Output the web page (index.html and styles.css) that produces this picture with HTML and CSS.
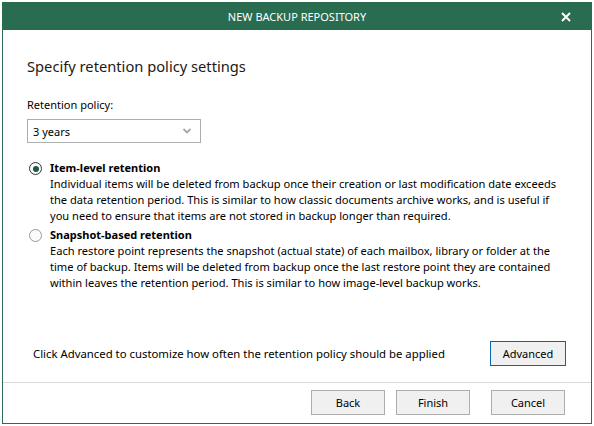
FILE: index.html
```html
<!DOCTYPE html>
<html>
<head>
<meta charset="utf-8">
<link rel="stylesheet" href="styles.css">
</head>
<body>
<div class="window">
  <div class="titlebar">
    <span class="title">NEW BACKUP REPOSITORY</span>
    <svg class="close" width="10" height="10" viewBox="0 0 10 10"><path d="M1 1L9 9M9 1L1 9" stroke="#fff" stroke-width="2" fill="none"/></svg>
  </div>
  <div class="main">
    <div class="heading">Specify retention policy settings</div>
    <div class="label">Retention policy:</div>
    <div class="select">
      <span>3 years</span>
      <svg class="chev" width="10" height="6" viewBox="0 0 10 6"><path d="M1.5 1L5 4.5L8.5 1" stroke="#a8a8a8" stroke-width="1.8" fill="none"/></svg>
    </div>
    <div class="option first">
      <span class="radio checked"></span>
      <div class="otext">
        <div class="oname">Item-level retention</div>
        <div class="odesc">Individual items will be deleted from backup once their creation or last modification date exceeds<br>the data retention period. This is similar to how classic documents archive works, and is useful if<br>you need to ensure that items are not stored in backup longer than required.</div>
      </div>
    </div>
    <div class="option second">
      <span class="radio"></span>
      <div class="otext">
        <div class="oname">Snapshot-based retention</div>
        <div class="odesc">Each restore point represents the snapshot (actual state) of each mailbox, library or folder at the<br>time of backup. Items will be deleted from backup once the last restore point they are contained<br>within leaves the retention period. This is similar to how image-level backup works.</div>
      </div>
    </div>
    <div class="advrow">
      <span class="advtext">Click Advanced to customize how often the retention policy should be applied</span>
      <button class="btn focused">Advanced</button>
    </div>
  </div>
  <div class="footer">
    <button class="btn">Back</button>
    <button class="btn finish">Finish</button>
    <button class="btn cancel">Cancel</button>
  </div>
</div>
</body>
</html>
```
FILE: styles.css
```css
html, body {
  margin: 0;
  padding: 0;
  background: #ffffff;
}
body {
  font-family: "Noto Sans", "Open Sans", sans-serif;
  font-size: 11px;
  color: #000;
}
.window {
  margin: 2px 0 0 2px;
  width: 588px;
  height: 420px;
  border: 1px solid #296c4f;
  display: flex;
  flex-direction: column;
  background: #fff;
}
.titlebar {
  height: 28px;
  margin: -1px -1px 0 -1px;
  background: #296c4f;
  color: #fff;
  display: flex;
  align-items: center;
  justify-content: center;
  position: relative;
}
.title {
  font-size: 11px;
}
.close {
  position: absolute;
  right: 21px;
  top: 10px;
}
.main {
  flex: 1;
  display: flex;
  flex-direction: column;
  padding: 26px 25px 16px 24px;
}
.heading {
  font-size: 14.7px;
  line-height: 20px;
  color: #1a1a1a;
}
.label {
  margin-top: 21px;
  line-height: 16px;
}
.select {
  margin-top: 6px;
  width: 174px;
  height: 24px;
  box-sizing: border-box;
  border: 1px solid #adadad;
  display: flex;
  align-items: center;
  justify-content: space-between;
  padding: 0 8px 0 5px;
}
.option {
  display: flex;
  align-items: flex-start;
  gap: 8px;
  padding-left: 2px;
}
.option.first { margin-top: 17px; }
.option.second { margin-top: 3px; }
.radio {
  width: 11px;
  height: 11px;
  border: 1px solid #9a9a9a;
  border-radius: 50%;
  margin-top: 2px;
  display: flex;
  align-items: center;
  justify-content: center;
  flex: none;
  background: #fbfbfb;
}
.radio.checked {
  border-color: #333;
}
.radio.checked::after {
  content: "";
  width: 6px;
  height: 6px;
  border-radius: 50%;
  background: #1f5a3d;
}
.oname {
  font-weight: bold;
  line-height: 16px;
}
.odesc {
  line-height: 16px;
  white-space: nowrap;
  font-size: 11.1px;
}
.advrow {
  margin-top: auto;
  display: flex;
  align-items: center;
  justify-content: space-between;
  padding-left: 6px;
}
.advtext {
  font-size: 11.35px;
}
.btn {
  font-family: inherit;
  font-size: 11px;
  color: #000;
  width: 74px;
  height: 25px;
  background: #f0f0f0;
  border: 1px solid #adadad;
  padding: 0;
  margin: 0;
}
.btn.focused {
  width: 76px;
  border-color: #0a64ad;
}
.footer {
  border-top: 1px solid #dadada;
  height: 41px;
  padding: 7px 26px 0 0;
  box-sizing: border-box;
  display: flex;
  justify-content: flex-end;
  align-items: flex-start;
}
.finish { margin-left: 11px; }
.cancel { margin-left: 21px; }
```
